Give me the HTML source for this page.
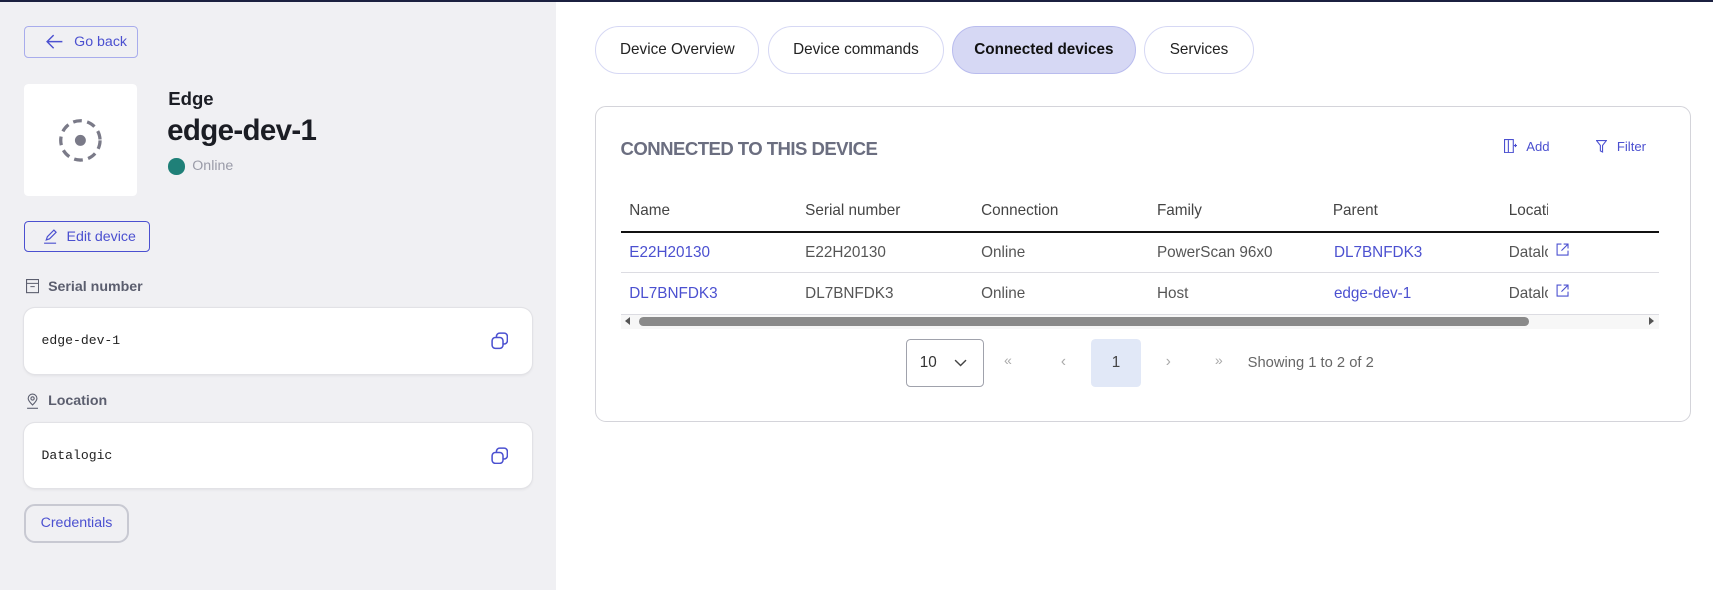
<!DOCTYPE html>
<html><head><meta charset="utf-8"><style>
html,body{margin:0;padding:0;width:1713px;height:590px;overflow:hidden;background:#fff;font-family:"Liberation Sans",sans-serif;}
#w{zoom:1.0925;width:1568px;height:540px;position:relative;}
.abs{position:absolute}
#left{left:0;top:0;width:509px;height:540px;background:#f0f0f3}
#topbar{left:0;top:0;width:1568px;height:2px;background:#1b2040}
.btn{position:absolute;border:1px solid #a8acec;border-radius:4px;color:#4b50d0;font-size:13px;box-sizing:border-box;display:flex;align-items:center}
.lbl{position:absolute;font-size:13px;color:#5b5e6e;font-weight:bold;display:flex;align-items:center;gap:8px}
.field{position:absolute;left:22px;width:465px;height:60px;background:#fff;border-radius:10px;box-shadow:0 0 0 1px #e2e2e6,0 1px 3px rgba(0,0,0,.08);font-family:"Liberation Mono",monospace;font-size:12px;color:#222;display:flex;align-items:center;padding-left:16px;box-sizing:border-box}
.copy{position:absolute;right:22px;top:22px}
.tab{position:absolute;top:24px;height:44px;border:1px solid #d6d8f4;border-radius:22px;box-sizing:border-box;font-size:14px;color:#222;display:flex;align-items:center;justify-content:center;background:#fff}
#card{left:545px;top:97px;width:1003px;height:289px;border:1px solid #d4d4da;border-radius:10px;box-sizing:border-box}
.th{position:absolute;top:185px;font-size:14px;color:#444}
.td{position:absolute;font-size:14px;color:#555}
.lk{color:#4b50d0}
</style></head><body><div id="w">
<div class="abs" id="left"></div>
<div class="abs" id="topbar"></div>

<div class="btn" style="left:22px;top:24px;width:104px;height:29px;padding-left:19px;gap:10px">
<svg width="16" height="14" viewBox="0 0 16 14"><path d="M15 7H1M7 1L1 7l6 6" fill="none" stroke="#4b50d0" stroke-width="1.3"/></svg>Go back</div>

<div class="abs" style="left:22px;top:77px;width:103px;height:102px;background:#fff;border-radius:4px"></div>
<svg class="abs" style="left:53px;top:108px" width="41" height="41" viewBox="0 0 41 41"><circle cx="20.5" cy="20.5" r="18" fill="none" stroke="#7a7a88" stroke-width="3" stroke-dasharray="8 5"/><circle cx="20.5" cy="20.5" r="5" fill="#7a7a88"/></svg>
<div class="abs" style="left:154px;top:81px;font-size:17px;font-weight:bold;color:#1b1d24">Edge</div>
<div class="abs" style="left:153px;top:104px;font-size:27px;font-weight:bold;color:#1b1d24;letter-spacing:-0.6px">edge-dev-1</div>
<div class="abs" style="left:154px;top:145px;width:15px;height:15px;border-radius:50%;background:#1f8078"></div>
<div class="abs" style="left:176px;top:145px;font-size:13px;color:#9a9ba8">Online</div>

<div class="btn" style="left:22px;top:202px;width:115px;height:29px;padding-left:16px;gap:9px;border-color:#4b50d0">
<svg width="13" height="14" viewBox="0 0 13 14"><path d="M3 10l1-3 6-6 2 2-6 6zM1 13h11" fill="none" stroke="#4b50d0" stroke-width="1.1"/></svg>Edit device</div>

<div class="lbl" style="left:24px;top:255px"><svg width="12" height="13" viewBox="0 0 12 13"><rect x="0.5" y="0.5" width="11" height="12" fill="none" stroke="#5b5e6e"/><path d="M0.5 4h11M4 7h4" stroke="#5b5e6e"/></svg>Serial number</div>
<div class="field" style="top:282px">edge-dev-1<svg class="copy" width="16" height="16" viewBox="0 0 16 16"><rect x="1" y="5" width="10" height="10" rx="3" fill="none" stroke="#4b50d0" stroke-width="1.4"/><path d="M5 5V4a3 3 0 0 1 3-3h4a3 3 0 0 1 3 3v4a3 3 0 0 1-3 3h-1" fill="none" stroke="#4b50d0" stroke-width="1.4"/></svg></div>

<div class="lbl" style="left:24px;top:360px"><svg width="12" height="15" viewBox="0 0 12 15"><path d="M6 11C3 8 2 6 2 5a4 4 0 0 1 8 0c0 1-1 3-4 6z" fill="none" stroke="#5b5e6e"/><circle cx="6" cy="5" r="1.5" fill="none" stroke="#5b5e6e"/><path d="M1 14h10" stroke="#5b5e6e"/></svg>Location</div>
<div class="field" style="top:387px">Datalogic<svg class="copy" width="16" height="16" viewBox="0 0 16 16"><rect x="1" y="5" width="10" height="10" rx="3" fill="none" stroke="#4b50d0" stroke-width="1.4"/><path d="M5 5V4a3 3 0 0 1 3-3h4a3 3 0 0 1 3 3v4a3 3 0 0 1-3 3h-1" fill="none" stroke="#4b50d0" stroke-width="1.4"/></svg></div>

<div class="btn" style="left:22px;top:461px;width:96px;height:36px;border:2px solid #c8c9d2;border-radius:10px;justify-content:center;font-size:13px">Credentials</div>

<div class="tab" style="left:545px;width:150px">Device Overview</div>
<div class="tab" style="left:703px;width:161px">Device commands</div>
<div class="tab" style="left:871px;width:169px;background:#d6d8f4;border-color:#b9bcee;font-weight:bold;color:#111">Connected devices</div>
<div class="tab" style="left:1047px;width:101px">Services</div>

<div class="abs" id="card"></div>
<div class="abs" style="left:568px;top:126px;font-size:17px;font-weight:bold;color:#6b6e80;letter-spacing:-0.5px">CONNECTED TO THIS DEVICE</div>
<div class="abs" style="left:1377px;top:127px;font-size:12px;color:#4b50d0;display:flex;gap:8px;align-items:center"><svg width="12" height="13" viewBox="0 0 12 13"><rect x="0.5" y="0.5" width="8" height="12" fill="none" stroke="#4b50d0"/><path d="M4 1v11M9 6h3M10.5 4.5v3" stroke="#4b50d0"/></svg>Add</div>
<div class="abs" style="left:1461px;top:127px;font-size:12px;color:#4b50d0;display:flex;gap:9px;align-items:center"><svg width="10" height="12" viewBox="0 0 10 12"><path d="M0.5 0.5h9L6 5v6L4 10V5z" fill="none" stroke="#4b50d0"/></svg>Filter</div>

<div class="th" style="left:576px">Name</div>
<div class="th" style="left:737px">Serial number</div>
<div class="th" style="left:898px">Connection</div>
<div class="th" style="left:1059px">Family</div>
<div class="th" style="left:1220px">Parent</div>
<div class="th" style="left:1381px;width:36px;overflow:hidden;white-space:nowrap">Location</div>
<div class="abs" style="left:568px;top:211px;width:951px;height:2px;background:#111"></div>

<div class="td lk" style="left:576px;top:223px">E22H20130</div>
<div class="td" style="left:737px;top:223px">E22H20130</div>
<div class="td" style="left:898px;top:223px">Online</div>
<div class="td" style="left:1059px;top:223px">PowerScan 96x0</div>
<div class="td lk" style="left:1221px;top:223px">DL7BNFDK3</div>
<div class="td" style="left:1381px;top:223px;width:36px;overflow:hidden;white-space:nowrap">Datalogic</div>
<svg class="abs" style="left:1424px;top:222px" width="12" height="12" viewBox="0 0 12 12"><path d="M5 1H1v10h10V7M7 1h4v4M11 1L5 7" fill="none" stroke="#4b50d0"/></svg>
<div class="abs" style="left:568px;top:249px;width:951px;height:1px;background:#dcdce2"></div>

<div class="td lk" style="left:576px;top:261px">DL7BNFDK3</div>
<div class="td" style="left:737px;top:261px">DL7BNFDK3</div>
<div class="td" style="left:898px;top:261px">Online</div>
<div class="td" style="left:1059px;top:261px">Host</div>
<div class="td lk" style="left:1221px;top:261px">edge-dev-1</div>
<div class="td" style="left:1381px;top:261px;width:36px;overflow:hidden;white-space:nowrap">Datalogic</div>
<svg class="abs" style="left:1424px;top:260px" width="12" height="12" viewBox="0 0 12 12"><path d="M5 1H1v10h10V7M7 1h4v4M11 1L5 7" fill="none" stroke="#4b50d0"/></svg>
<div class="abs" style="left:568px;top:287px;width:951px;height:1px;background:#dcdce2"></div>

<div class="abs" style="left:568px;top:288px;width:951px;height:13px;background:#f7f7f7"></div>
<div class="abs" style="left:572px;top:290px;width:0;height:0;border-top:4px solid transparent;border-bottom:4px solid transparent;border-right:5px solid #555"></div>
<div class="abs" style="left:1509px;top:290px;width:0;height:0;border-top:4px solid transparent;border-bottom:4px solid transparent;border-left:5px solid #555"></div>
<div class="abs" style="left:585px;top:290px;width:815px;height:8px;border-radius:4px;background:#8a8a8a"></div>

<div class="abs" style="left:829px;top:310px;width:72px;height:44px;border:1px solid #a0a2ac;border-radius:4px;box-sizing:border-box;font-size:14px;color:#333;display:flex;align-items:center;padding-left:12px;gap:16px">10<svg width="12" height="7" viewBox="0 0 12 7"><path d="M1 1l5 5 5-5" fill="none" stroke="#444" stroke-width="1.3"/></svg></div>
<div class="abs" style="left:919px;top:323px;font-size:13px;color:#aaa">«</div>
<div class="abs" style="left:971px;top:323px;font-size:14px;color:#aaa">‹</div>
<div class="abs" style="left:999px;top:310px;width:45px;height:44px;background:#e1e8f7;border-radius:4px;font-size:14px;color:#444;display:flex;align-items:center;justify-content:center">1</div>
<div class="abs" style="left:1067px;top:323px;font-size:14px;color:#aaa">›</div>
<div class="abs" style="left:1112px;top:323px;font-size:13px;color:#aaa">»</div>
<div class="abs" style="left:1142px;top:325px;font-size:13.5px;color:#666">Showing 1 to 2 of 2</div>
</div></body></html>
